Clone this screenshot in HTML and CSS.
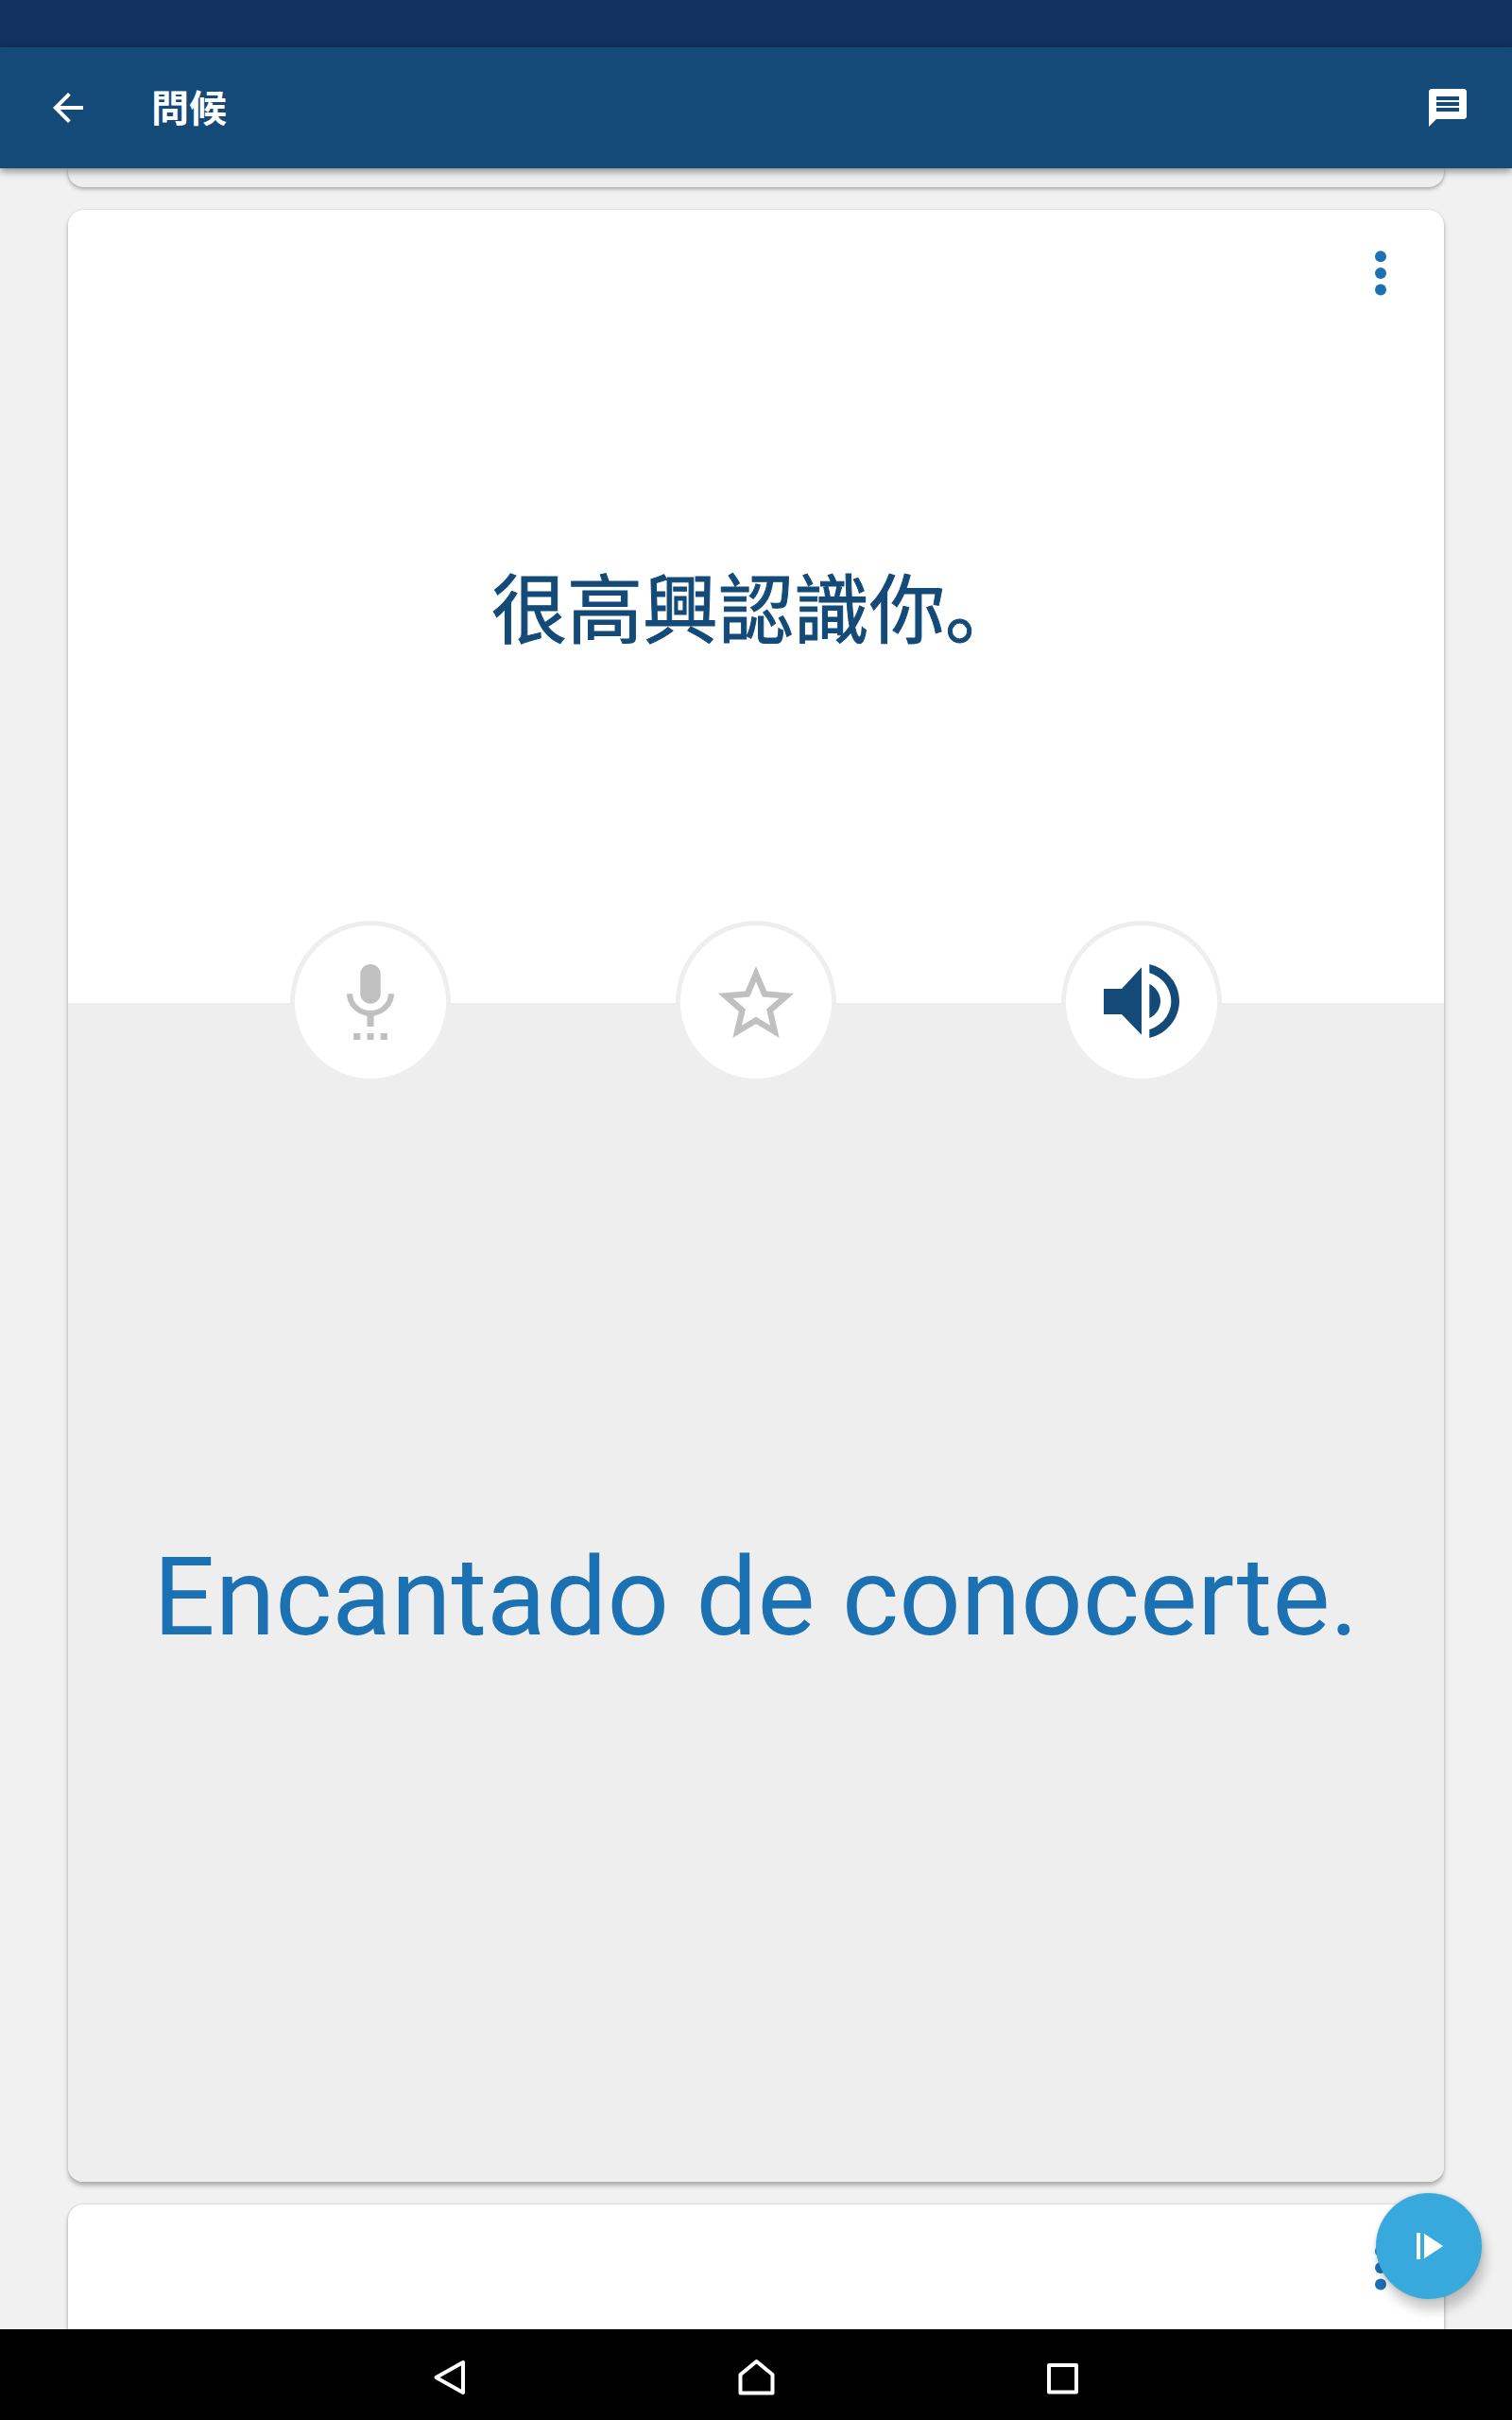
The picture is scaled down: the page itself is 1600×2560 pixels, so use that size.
FILE: index.html
```
<!DOCTYPE html>
<html lang="zh-CN">
  <head>
    <meta charset="UTF-8" />
    <meta name="viewport" content="width=device-width, initial-scale=1.0" />
    <title>問候</title>
    <link rel="stylesheet" href="styles.css">
  </head>
  <body>
    <div class="status-bar"></div>

    <header class="app-bar">
      <svg class="app-icon" viewBox="0 0 24 24"><path d="M20 11H7.830l5.590-5.590L12 4l-8 8 8 8 1.410-1.410L7.830 13H20v-2z"/></svg>
      <h1>問候</h1>
      <svg class="app-icon" viewBox="0 0 24 24"><path d="M20.500 2h-17C2.700 2 2 2.700 2 3.500V22l4-4h14.500c.8 0 1.500-.7 1.500-1.500v-13c0-.8-.7-1.500-1.500-1.500zM18 14H6v-2h12v2zm0-3H6V9h12v2zm0-3H6V6h12v2z"/></svg>
    </header>

    <main class="phrases">
      <div class="card card-prev"></div>

      <div class="card card-current">
        <div class="front">
          <svg class="more" viewBox="0 0 12 48"><circle cx="6" cy="6.300" r="6"/><circle cx="6" cy="24" r="6"/><circle cx="6" cy="41.500" r="6"/></svg>
          <p class="source-text">很高興認識你。</p>
        </div>
        <div class="back">
          <div class="actions">
            <button class="action" aria-label="mic">
              <svg class="icon-mic" viewBox="5 1 14 23" preserveAspectRatio="none"><path d="M7 24h2v-2H7v2zm5-11c1.660 0 3-1.340 3-3V4c0-1.660-1.340-3-3-3S9 2.340 9 4v6c0 1.660 1.340 3 3 3zm-1 11h2v-2h-2v2zm4 0h2v-2h-2v2zm4-14h-1.700c0 3-2.540 5.100-5.300 5.100S6.700 13 6.700 10H5c0 3.410 2.720 6.230 6 6.720V20h2v-3.280c3.280-.49 6-3.310 6-6.720z"/></svg>
            </button>
            <button class="action" aria-label="star">
              <svg class="icon-star" viewBox="0 0 24 24"><path d="M22 9.240l-7.190-.62L12 2 9.190 8.630 2 9.240l5.460 4.730L5.820 21 12 17.270 18.180 21l-1.630-7.030L22 9.240zM12 15.400l-3.760 2.270 1-4.280-3.320-2.880 4.380-.38L12 6.100l1.710 4.040 4.380.38-3.320 2.880 1 4.280L12 15.400z"/></svg>
            </button>
            <button class="action" aria-label="sound">
              <svg class="icon-sound" viewBox="0 0 80 80"><path d="M0 26h19L40 3.300v71.400L19 53H0zM48.300 21C55 24 60 31 60 39s-5 15-11.700 18zM48.300 0C66 4 80 20 80 39s-14 35-31.700 39v-9C61.500 65 71.300 53 71.300 39S61.500 13 48.300 9.300z"/></svg>
            </button>
          </div>
          <p class="target-text" lang="es">Encantado de conocerte.</p>
        </div>
      </div>

      <div class="card card-next">
        <svg class="more" viewBox="0 0 12 48"><circle cx="6" cy="6.300" r="6"/><circle cx="6" cy="24" r="6"/><circle cx="6" cy="41.500" r="6"/></svg>
      </div>

      <button class="fab" aria-label="play">
        <svg viewBox="0 0 28 28"><path d="M0 0h4v28H0zM8 .7v26.600L28 14z"/></svg>
      </button>
    </main>

    <nav class="nav-bar">
      <svg viewBox="0 0 40 40"><path d="M5.500 20L34 4v32z"/></svg>
      <svg viewBox="0 0 40 40"><path d="M3.500 36.500V17L20.500 3l17 14v19.500z"/></svg>
      <svg viewBox="0 0 40 40"><path d="M6 7h29v28.500H6z"/></svg>
    </nav>
  </body>
</html>
```

FILE: styles.css
```
* {
  box-sizing: border-box;
  margin: 0;
  padding: 0;
}

body {
  display: flex;
  flex-direction: column;
  height: 2560px;
  background-color: #f1f1f1;
  font-family: Roboto, "Noto Sans CJK SC", sans-serif;
  overflow: hidden;
}

svg {
  display: block;
  flex: none;
}

button {
  border: none;
}

.status-bar {
  height: 50px;
  background-color: #12315f;
}

.app-bar {
  display: flex;
  align-items: center;
  height: 128px;
  padding: 0 44px 0 48px;
  background-color: #144a78;
  box-shadow: 0 3px 8px rgba(0, 0, 0, 0.45);
  position: relative;
  z-index: 2;
}

.app-bar h1 {
  flex: 1;
  margin-left: 64px;
  padding-top: 3px;
  color: #fff;
  font-size: 40px;
  font-weight: bold;
  line-height: 48px;
}

.app-icon {
  width: 48px;
  height: 48px;
  fill: #fff;
}

.phrases {
  flex: 1;
  display: flex;
  flex-direction: column;
  gap: 24px;
  padding: 0 72px;
  overflow: hidden;
  position: relative;
}

.card {
  flex: none;
  border-radius: 16px;
  background-color: #fff;
  box-shadow: 0 2px 4px rgba(0, 0, 0, 0.3), 0 0 2px rgba(0, 0, 0, 0.15);
}

.card-prev {
  height: 20px;
  border-radius: 0 0 16px 16px;
  background-color: #eee;
}

.card-current {
  height: 2086px;
  box-shadow: 0 4px 5px rgba(0, 0, 0, 0.28), 0 0 2px rgba(0, 0, 0, 0.15);
}

.card-next {
  height: 400px;
  padding-top: 43px;
}

.more {
  width: 12px;
  height: 48px;
  margin: 0 61px 0 auto;
  fill: #1c71b3;
}

.front {
  height: 839px;
  padding-top: 43px;
}

.source-text {
  margin-top: 274px;
  color: #144a78;
  font-size: 80px;
  line-height: 120px;
  text-align: center;
  -webkit-text-stroke: 1px #144a78;
}

.back {
  height: 1247px;
  border-radius: 0 0 16px 16px;
  background-color: #eee;
}

.actions {
  display: flex;
  justify-content: center;
  gap: 238px;
  transform: translateY(-87px);
}

.action {
  display: flex;
  justify-content: center;
  align-items: center;
  width: 170px;
  height: 172px;
  border: 5px solid #eee;
  border-radius: 50%;
  background-color: #fff;
  fill: #c0c0c0;
}

.icon-mic {
  width: 50px;
  height: 80px;
}

.icon-star {
  width: 96px;
  height: 96px;
  margin-top: 4px;
}

.icon-sound {
  width: 80px;
  height: 80px;
  fill: #144a78;
}

.target-text {
  margin-top: 389px;
  color: #1c71b3;
  font-size: 115px;
  line-height: 135px;
  text-align: center;
  white-space: nowrap;
}

.fab {
  position: absolute;
  right: 32px;
  bottom: 32px;
  display: flex;
  align-items: center;
  width: 112px;
  height: 112px;
  padding-left: 43px;
  border-radius: 50%;
  background-color: #37a9dc;
  box-shadow: 4px 12px 12px rgba(0, 0, 0, 0.2), 0 0 4px rgba(0, 0, 0, 0.15);
}

.fab svg {
  width: 28px;
  height: 28px;
  fill: #fff;
}

.nav-bar {
  display: flex;
  justify-content: center;
  gap: 284px;
  height: 96px;
  padding-top: 31px;
  background-color: #000;
}

.nav-bar svg {
  width: 40px;
  height: 40px;
  fill: none;
  stroke: #fff;
  stroke-width: 4;
  stroke-linejoin: round;
}
```
